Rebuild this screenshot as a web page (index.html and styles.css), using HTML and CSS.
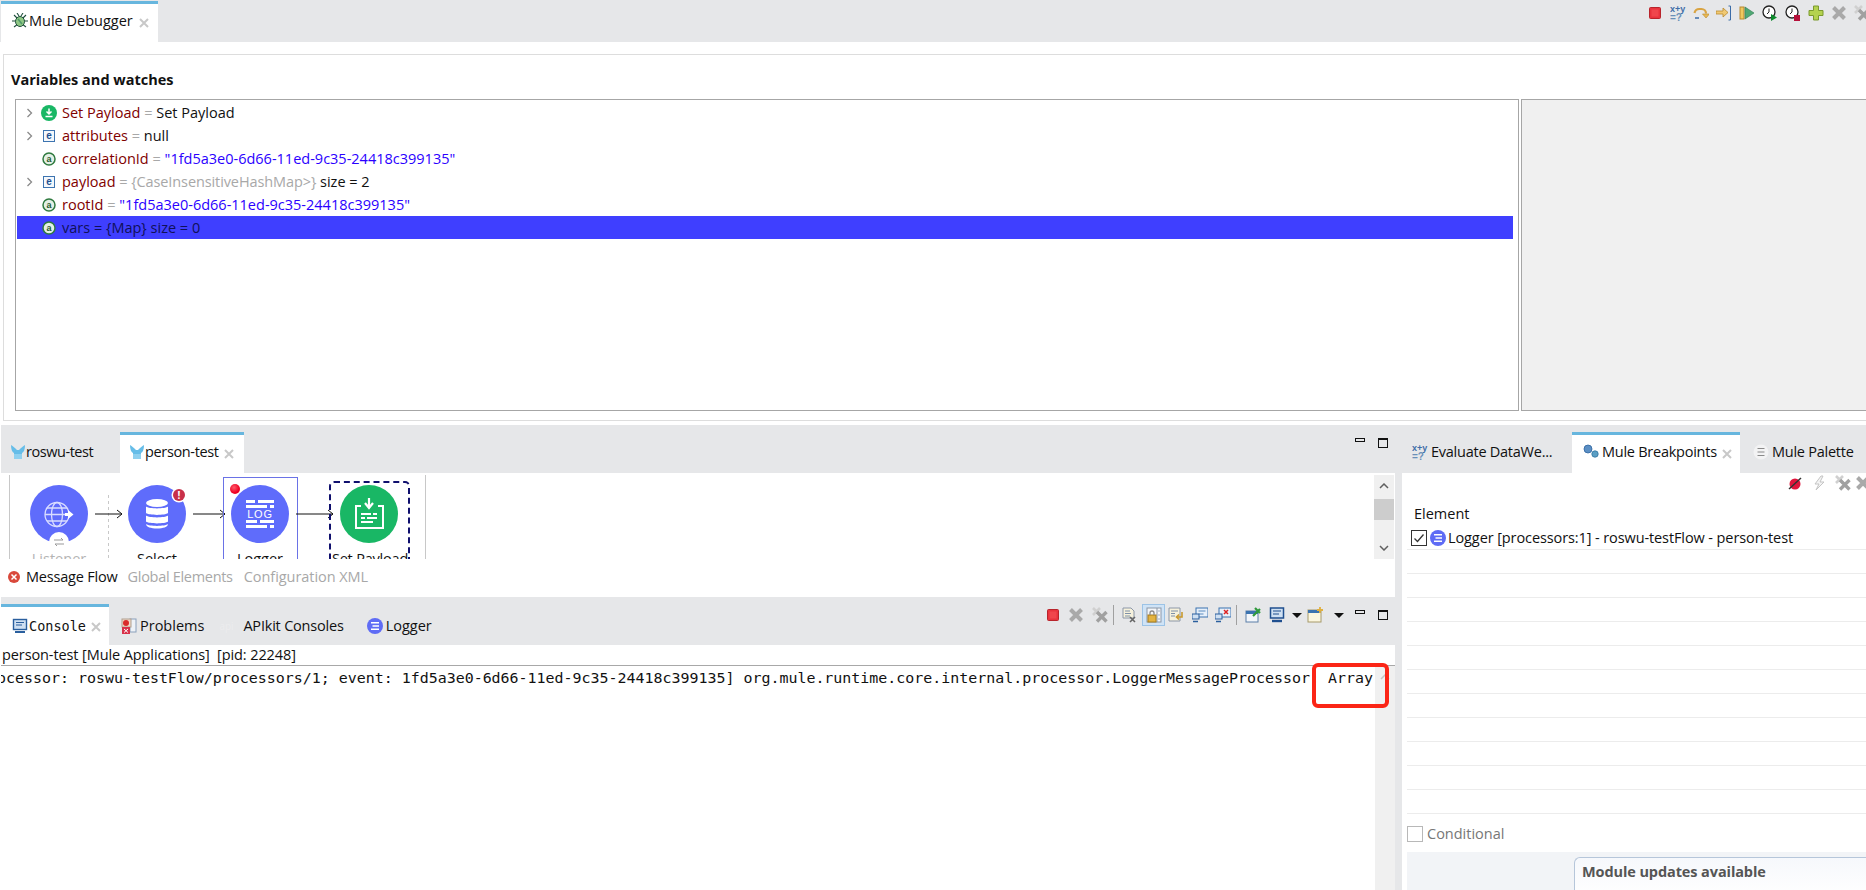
FILE: index.html
```html
<!DOCTYPE html>
<html lang="en">
<head>
<meta charset="utf-8">
<title>Mule Debugger</title>
<link rel="stylesheet" href="styles.css">
</head>
<body>
<svg class="defs" width="0" height="0" aria-hidden="true">
  <defs>
    <symbol id="i-stop" viewBox="0 0 16 16"><rect x="2.500" y="2.500" width="11" height="11" rx="1" fill="#e8333c" stroke="#b8242c"/><rect x="4.500" y="4.500" width="7" height="7" fill="#f0464c"/></symbol>
    <symbol id="i-x" viewBox="0 0 16 16"><path d="M2.500 2.500l11 11M13.500 2.500l-11 11" stroke="#a9a9a9" stroke-width="4"/></symbol>
    <symbol id="i-xx" viewBox="0 0 16 16"><path d="M1 1l7 7M8 1L1 8" stroke="#d0d0d0" stroke-width="2.600"/><path d="M5 5l9.500 9.500M14.500 5L5 14.500" stroke="#a0a0a0" stroke-width="3.400"/></symbol>
    <symbol id="i-close" viewBox="0 0 12 12"><path d="M2 2l8 8M10 2l-8 8" stroke="#c8c8c8" stroke-width="2"/></symbol>
    <symbol id="i-logger" viewBox="0 0 16 16"><circle cx="8" cy="8" r="8" fill="#5f6cf5"/><path d="M4 4.800h8M5.500 8h6.500M4 11.200h8" stroke="#fff" stroke-width="1.500"/></symbol>
    <symbol id="i-elem" viewBox="0 0 16 16"><rect x="2.500" y="2.500" width="11" height="11" fill="#f4f8fc" stroke="#3d74b0"/><text x="8" y="11" class="elem-text">e</text></symbol>
    <symbol id="i-at" viewBox="0 0 16 16"><circle cx="8" cy="8" r="6" fill="#e4f0e6" stroke="#2f7a3f" stroke-width="1.500"/><text x="8" y="11" class="at-text">a</text></symbol>
    <symbol id="i-chev" viewBox="0 0 10 12"><path d="M2.500 2l4 4-4 4" fill="none" stroke="#8a8a8a" stroke-width="1.300"/></symbol>
    <symbol id="i-mule" viewBox="0 0 16 16"><path d="M1 1c2 1 4 3 6 5h2c2-2 4-4 6-5 0 4-1 7-3 8v6H4V9C2 8 1 5 1 1z" fill="#66bde8"/><path d="M4 10h8v5H4z" fill="#8fd0ef"/></symbol>
    <symbol id="i-xy" viewBox="0 0 16 18"><text x="0" y="8" class="xy-a">x+y</text><text x="0" y="17" class="xy-b">=?</text></symbol>
  </defs>
</svg>

<section class="debug-view">
  <header class="tabbar top-tabbar">
    <div class="tab tab-active debugger-tab">
      <svg class="tab-icon" viewBox="0 0 16 16"><g stroke="#1f4f3c" stroke-width="1.100" fill="none"><path d="M2 2l4 4M14 2l-4 4M0 8h4M12 8h4M2 14l4-3M14 14l-4-3M5 0l2 3M11 0L9 3"/></g><ellipse cx="8" cy="8.500" rx="4.500" ry="5" fill="#8fc884" stroke="#1f4f3c"/><path d="M6 6l4 5" stroke="#4f9a6a" stroke-width="1.500"/></svg>
      <span class="tab-label">Mule Debugger</span>
      <svg class="tab-close"><use href="#i-close"/></svg>
    </div>
    <div class="toolbar top-toolbar">
      <svg class="tool"><use href="#i-stop"/></svg>
      <svg class="tool tool-tall"><use href="#i-xy"/></svg>
      <svg class="tool" viewBox="0 0 16 16"><path d="M1.500 8a5 5 0 0 1 5-4h2a4.500 4.500 0 0 1 4.500 4.500" fill="none" stroke="#d9a443" stroke-width="2.200"/><path d="M9.500 9h7l-3.500 4z" fill="#e9b955" stroke="#b98a2e" stroke-width=".6"/><path d="M2 13h4" stroke="#3b6ca8" stroke-width="1.500"/></svg>
      <svg class="tool" viewBox="0 0 16 16"><path d="M0 6h7V3l5 4.500L7 12V9H0z" fill="#f0c973" stroke="#b98a2e" stroke-width=".8"/><path d="M12.500 1h2v14h-2" fill="none" stroke="#3b6ca8"/></svg>
      <svg class="tool" viewBox="0 0 16 16"><rect x="1" y="2" width="4" height="12" fill="#efc85f" stroke="#b98a2e"/><path d="M6 2l9 6-9 6z" fill="#4fa874" stroke="#2f7a50" stroke-width=".6"/></svg>
      <svg class="tool" viewBox="0 0 16 16"><circle cx="7" cy="7" r="6" fill="#fff" stroke="#222" stroke-width="1.300"/><path d="M7 3.500V7L5 9" fill="none" stroke="#222"/><path d="M9 9l6 3.500L9 16z" fill="#0d8a2c"/></svg>
      <svg class="tool" viewBox="0 0 16 16"><circle cx="7" cy="7" r="6" fill="#fff" stroke="#222" stroke-width="1.300"/><path d="M7 3.500V7L5 9" fill="none" stroke="#222"/><rect x="9" y="10" width="6" height="6" fill="#b5103a"/></svg>
      <svg class="tool" viewBox="0 0 16 16"><path d="M5.500 1h5v4.500H15v5h-4.500V15h-5v-4.500H1v-5h4.500z" fill="#b4d24f" stroke="#7b9a2e"/></svg>
      <svg class="tool"><use href="#i-x"/></svg>
      <svg class="tool"><use href="#i-xx"/></svg>
    </div>
  </header>
  <div class="debug-panel">
    <h2 class="panel-title">Variables and watches</h2>
    <div class="panel-split">
      <div class="tree">
        <div class="tree-row">
          <svg class="chev"><use href="#i-chev"/></svg>
          <svg class="node-icon" viewBox="0 0 16 16"><circle cx="8" cy="8" r="8" fill="#19b765"/><path d="M8 3.500v5M5.500 6.500L8 9l2.500-2.500M4.500 11.500h7" fill="none" stroke="#fff" stroke-width="1.500"/></svg>
          <span><span class="var">Set Payload</span> <span class="eq">=</span> Set Payload</span>
        </div>
        <div class="tree-row">
          <svg class="chev"><use href="#i-chev"/></svg>
          <svg class="node-icon"><use href="#i-elem"/></svg>
          <span><span class="var">attributes</span> <span class="eq">=</span> null</span>
        </div>
        <div class="tree-row">
          <span class="chev"></span>
          <svg class="node-icon"><use href="#i-at"/></svg>
          <span><span class="var">correlationId</span> <span class="eq">=</span> <span class="str">"1fd5a3e0-6d66-11ed-9c35-24418c399135"</span></span>
        </div>
        <div class="tree-row">
          <svg class="chev"><use href="#i-chev"/></svg>
          <svg class="node-icon"><use href="#i-elem"/></svg>
          <span><span class="var">payload</span> <span class="eq eq-long">= {CaseInsensitiveHashMap&gt;}</span> size = 2</span>
        </div>
        <div class="tree-row">
          <span class="chev"></span>
          <svg class="node-icon"><use href="#i-at"/></svg>
          <span><span class="var">rootId</span> <span class="eq">=</span> <span class="str">"1fd5a3e0-6d66-11ed-9c35-24418c399135"</span></span>
        </div>
        <div class="tree-row tree-row-selected">
          <span class="chev"></span>
          <svg class="node-icon"><use href="#i-at"/></svg>
          <span>vars = {Map} size = 0</span>
        </div>
      </div>
      <div class="detail-box"></div>
    </div>
  </div>
</section>

<main class="workbench">
  <div class="left-column">
    <section class="editor">
      <header class="tabbar">
        <div class="tab roswu-tab">
          <svg class="tab-icon"><use href="#i-mule"/></svg>
          <span class="tab-label">roswu-test</span>
        </div>
        <div class="tab tab-active person-tab">
          <svg class="tab-icon"><use href="#i-mule"/></svg>
          <span class="tab-label">person-test</span>
          <svg class="tab-close"><use href="#i-close"/></svg>
        </div>
        <div class="toolbar window-tools">
          <span class="win-min"></span>
          <span class="win-max"></span>
        </div>
      </header>
      <div class="editor-body">
        <div class="flow-canvas">
          <span class="flow-line flow-line-start"></span>
          <span class="flow-line flow-line-dash"></span>
          <span class="flow-line flow-line-end"></span>

          <span class="flow-node node-listener">
            <svg viewBox="0 0 58 58"><circle cx="29" cy="29" r="29" fill="#5f6cfb"/><g fill="none" stroke="#d9ddff" stroke-width="1.300"><circle cx="27" cy="29.500" r="12"/><ellipse cx="27" cy="29.500" rx="5.500" ry="12"/><path d="M15 29.500h24M17 23h20M17 36h20"/></g><path d="M35 28h3v-3l5.500 4.500L38 34v-3h-3z" fill="#fff"/></svg>
          </span>
          <svg class="flow-badge-swap" viewBox="0 0 20 20"><circle cx="10" cy="10" r="10" fill="#fff"/><path d="M5 8h9l-2-2M15 12H6l2 2" fill="none" stroke="#999"/></svg>
          <span class="flow-label label-listener">Listener</span>

          <svg class="flow-arrow arrow-a" viewBox="0 0 28 10"><path d="M0 5h27M22 1l5 4-5 4" fill="none" stroke="#111"/></svg>

          <span class="flow-node node-select">
            <svg viewBox="0 0 58 58"><circle cx="29" cy="29" r="29" fill="#5f6cfb"/><ellipse cx="29" cy="18" rx="11" ry="4" fill="#fff"/><path d="M18 21.500c3 2.500 19 2.500 22 0V28c-3 2.500-19 2.500-22 0zM18 30.500c3 2.500 19 2.500 22 0v6c-3 2.500-19 2.500-22 0zM18 39c3 2.500 19 2.500 22 0 0 3-5 4.500-11 4.500S18 42 18 39z" fill="#fff"/></svg>
          </span>
          <span class="flow-badge-error">!</span>
          <span class="flow-label label-select">Select</span>

          <svg class="flow-arrow arrow-b" viewBox="0 0 33 10"><path d="M0 5h32M27 1l5 4-5 4" fill="none" stroke="#111"/></svg>

          <span class="flow-select-box"></span>
          <span class="flow-node node-logger">
            <svg viewBox="0 0 58 58"><circle cx="29" cy="29" r="29" fill="#5f6cfb"/><path d="M15 15h9v3h-9zM27 15h16v3H27zM15 20h21v3H15zM39 20h4v3h-4zM15 35h11v3H15zM29 35h14v3H29zM15 40h21v3H15zM39 40h4v3h-4z" fill="#fff"/><text x="29" y="33" class="log-text">LOG</text></svg>
          </span>
          <span class="flow-breakpoint"></span>
          <span class="flow-label label-logger">Logger</span>

          <svg class="flow-arrow arrow-c" viewBox="0 0 38 10"><path d="M0 5h37M32 1l5 4-5 4" fill="none" stroke="#111"/></svg>

          <span class="flow-current-box"></span>
          <span class="flow-node node-payload">
            <svg viewBox="0 0 58 58"><circle cx="29" cy="29" r="29" fill="#19b765"/><path d="M21 21h-5v22h27V21h-5" fill="none" stroke="#fff" stroke-width="2"/><path d="M29 13v9M25 18l4 5 4-5" fill="none" stroke="#fff" stroke-width="2.200"/><path d="M21 29h10M33 29h4M21 33h4M27 33h10M21 37h12" stroke="#fff" stroke-width="2"/></svg>
          </span>
          <span class="flow-label label-payload">Set Payload</span>
        </div>
        <div class="scrollbar editor-scroll">
          <svg class="scroll-arrow" viewBox="0 0 10 6"><path d="M1 5l4-4 4 4" fill="none" stroke="#606060" stroke-width="1.500"/></svg>
          <span class="scroll-thumb"></span>
          <svg class="scroll-arrow scroll-arrow-end" viewBox="0 0 10 6"><path d="M1 1l4 4 4-4" fill="none" stroke="#606060" stroke-width="1.500"/></svg>
        </div>
      </div>
      <nav class="editor-pages">
        <svg class="page-error" viewBox="0 0 12 12"><circle cx="6" cy="6" r="6" fill="#d9483b"/><path d="M3.500 3.500l5 5M8.500 3.500l-5 5" stroke="#fff" stroke-width="1.500"/></svg>
        <span class="page-current">Message Flow</span>
        <span class="page-link page-global">Global Elements</span>
        <span class="page-link">Configuration XML</span>
      </nav>
    </section>

    <section class="console">
      <header class="tabbar">
        <div class="tab tab-active console-tab">
          <svg class="tab-icon" viewBox="0 0 16 16"><rect x="1.500" y="1.500" width="13" height="10" fill="#cfe0f2" stroke="#2a5f9e" stroke-width="1.400"/><path d="M4 4.500h8M4 7h6" stroke="#2a5f9e"/><path d="M3 14h10" stroke="#2a5f9e" stroke-width="2"/></svg>
          <span class="tab-label mono">Console</span>
          <svg class="tab-close"><use href="#i-close"/></svg>
        </div>
        <div class="tab problems-tab">
          <svg class="tab-icon" viewBox="0 0 16 16"><rect x="9" y="1" width="6" height="13" fill="#eef2f7" stroke="#8aa0bb"/><rect x="1" y="1" width="9" height="8" fill="#f2d9c8" stroke="#b0a090"/><circle cx="5" cy="5" r="3" fill="#d92b2b"/><rect x="1" y="9" width="8" height="7" fill="#d8324a"/><path d="M3 11l4 3.500M7 11l-4 3.500" stroke="#fff"/></svg>
          <span class="tab-label">Problems</span>
        </div>
        <div class="tab apikit-tab">
          <span class="api-mark">api</span>
          <span class="tab-label">APIkit Consoles</span>
        </div>
        <div class="tab logger-tab">
          <svg class="tab-icon"><use href="#i-logger"/></svg>
          <span class="tab-label">Logger</span>
        </div>
        <div class="toolbar console-tools">
          <svg class="tool gap-7"><use href="#i-stop"/></svg>
          <svg class="tool gap-8"><use href="#i-x"/></svg>
          <svg class="tool gap-5"><use href="#i-xx"/></svg>
          <span class="tool-sep gap-7"></span>
          <svg class="tool gap-5" viewBox="0 0 16 16"><path d="M2 1h8l3 3v7H2z" fill="#f6f1dc" stroke="#8c97a8"/><path d="M4 4h5M4 6.500h6M4 9h5" stroke="#7d90a8"/><path d="M9 10l5 5M14 10l-5 5" stroke="#666" stroke-width="1.600"/></svg>
          <span class="tool-on gap-3"><svg class="tool" viewBox="0 0 16 16"><rect x="1" y="1" width="14" height="14" fill="#f4f6f9" stroke="#8c97a8"/><path d="M11 1v14" stroke="#8c97a8"/><path d="M12.500 4h1M12.500 8h1M12.500 12h1" stroke="#4a6a90"/><rect x="2" y="8" width="8" height="7" fill="#e3b341" stroke="#a67c1c"/><path d="M4 8V6a2 2 0 0 1 4 0v2" fill="none" stroke="#8a8a8a" stroke-width="1.300"/></svg></span>
          <svg class="tool gap-8" viewBox="0 0 16 16"><path d="M1 1h11v13H1z" fill="#f6f1dc" stroke="#8c97a8"/><path d="M3 4h7M3 6.500h4M3 9h4" stroke="#7d90a8"/><path d="M14 5v5H9M11 7.500L8.500 10l2.500 2.500" fill="none" stroke="#c99a2e" stroke-width="1.600"/></svg>
          <svg class="tool gap-7" viewBox="0 0 16 16"><rect x="4" y="1" width="12" height="9" fill="#e7f0fa" stroke="#3b73b0"/><path d="M6.500 4h7M6.500 7h5" stroke="#5b8cc0"/><rect x="0" y="7" width="7" height="5" fill="#cfe0f2" stroke="#2a5f9e"/><path d="M1 14.500h5" stroke="#2a5f9e" stroke-width="1.500"/></svg>
          <svg class="tool gap-5" viewBox="0 0 16 16"><rect x="4" y="1" width="12" height="9" fill="#e7f0fa" stroke="#3b73b0"/><path d="M9 3l4 4M13 3L9 7" stroke="#d22" stroke-width="1.500"/><rect x="0" y="7" width="7" height="5" fill="#cfe0f2" stroke="#2a5f9e"/><path d="M1 14.500h5" stroke="#2a5f9e" stroke-width="1.500"/></svg>
          <span class="tool-sep gap-8"></span>
          <svg class="tool gap-8" viewBox="0 0 16 16"><rect x="1" y="4" width="12" height="11" fill="#f3f6fa" stroke="#5a7fa8"/><path d="M1 4h12v3H1z" fill="#3b73b0"/><path d="M8 9l7-7M10 1l5 5" stroke="#2f9a3c" stroke-width="2.200"/></svg>
          <svg class="tool gap-7" viewBox="0 0 16 16"><rect x="1.500" y="1" width="13" height="10" fill="#cfe0f2" stroke="#1f4f8f" stroke-width="1.500"/><path d="M4 4h8M4 7h6" stroke="#1f4f8f"/><path d="M3 14h10" stroke="#1f4f8f" stroke-width="2.400"/></svg>
          <span class="tool-caret gap-5"></span>
          <svg class="tool gap-11" viewBox="0 0 16 16"><rect x="1" y="3" width="13" height="12" fill="#fbf6df" stroke="#a69a6a"/><path d="M1 3h13v3H1z" fill="#3b73b0"/><path d="M13 0v6M10 3h6" stroke="#e0b040" stroke-width="1.800"/></svg>
          <span class="tool-caret gap-11"></span>
          <span class="win-min gap-13"></span>
          <span class="win-max"></span>
        </div>
      </header>
      <div class="console-status">person-test [Mule Applications]&nbsp; [pid: 22248]</div>
      <div class="console-body">
        <div class="console-output mono">
          <span class="console-line">ocessor: roswu-testFlow/processors/1; event: 1fd5a3e0-6d66-11ed-9c35-24418c399135] org.mule.runtime.core.internal.processor.LoggerMessageProcessor:&nbsp;Array</span>
        </div>
        <div class="scrollbar console-scroll">
          <svg class="scroll-arrow scroll-arrow-faint" viewBox="0 0 10 6"><path d="M1 5l4-4 4 4" fill="none" stroke="#c4c4c4" stroke-width="1.500"/></svg>
        </div>
        <span class="highlight-box"></span>
      </div>
    </section>
  </div>

  <div class="sash"></div>

  <aside class="right-column">
    <header class="tabbar">
      <div class="tab evaluate-tab">
        <svg class="tab-icon tool-tall"><use href="#i-xy"/></svg>
        <span class="tab-label">Evaluate DataWe...</span>
      </div>
      <div class="tab tab-active breakpoints-tab">
        <svg class="tab-icon" viewBox="0 0 16 16"><circle cx="5" cy="5" r="4" fill="#5b8fc4" stroke="#2f64a0" stroke-width=".8"/><circle cx="12" cy="10" r="3.200" fill="#5b9fc4" stroke="#2f74a0" stroke-width=".8"/></svg>
        <span class="tab-label">Mule Breakpoints</span>
        <svg class="tab-close"><use href="#i-close"/></svg>
      </div>
      <div class="tab palette-tab">
        <svg class="tab-icon" viewBox="0 0 16 16"><circle cx="8" cy="8" r="7.500" fill="#f3f3f4"/><path d="M4.500 4.500h7M4.500 8h7M4.500 11.500h7" stroke="#8a8a8a"/></svg>
        <span class="tab-label">Mule Palette</span>
      </div>
    </header>
    <div class="bp-toolbar">
      <svg class="tool" viewBox="0 0 16 16"><circle cx="8" cy="9" r="5.500" fill="#e0143c"/><path d="M2 14L14 3" stroke="#333" stroke-width="1.500"/></svg>
      <svg class="tool" viewBox="0 0 16 16"><path d="M10 1L4 9h4l-3 6 8-8H9l3-6z" fill="#f4f4f4" stroke="#c4c4c4"/></svg>
      <svg class="tool"><use href="#i-xx"/></svg>
      <svg class="tool tool-clipped"><use href="#i-x"/></svg>
    </div>
    <div class="bp-heading">Element</div>
    <div class="bp-table">
      <div class="bp-row bp-row-first">
        <span class="check check-on"><svg viewBox="0 0 14 14"><path d="M2.500 7.500l3 3 6-7" fill="none" stroke="#333" stroke-width="1.300"/></svg></span>
        <svg class="bp-icon"><use href="#i-logger"/></svg>
        <span>Logger [processors:1] - roswu-testFlow - person-test</span>
      </div>
      <div class="bp-row"></div><div class="bp-row"></div><div class="bp-row"></div>
      <div class="bp-row"></div><div class="bp-row"></div><div class="bp-row"></div>
      <div class="bp-row"></div><div class="bp-row"></div><div class="bp-row"></div>
      <div class="bp-row"></div><div class="bp-row"></div>
    </div>
    <label class="conditional"><span class="check"></span><span>Conditional</span></label>
    <div class="update-area">
      <div class="update-card">
        <div class="update-title">Module updates available</div>
      </div>
    </div>
  </aside>
</main>
</body>
</html>
```

FILE: styles.css
```css
* { box-sizing: border-box; }
html, body { margin: 0; padding: 0; }
body {
  width: 1866px;
  height: 890px;
  overflow: hidden;
  background: #fff;
  color: #111;
  font-family: "Open Sans", "Noto Sans", sans-serif;
  font-size: 14.5px;
  line-height: 20px;
}
.defs { position: absolute; }
.mono { font-family: "DejaVu Sans Mono", "Liberation Mono", monospace; font-size: 14.950px; }

.debug-view { height: 425px; display: flex; flex-direction: column; padding-left: 1px; }
.tabbar {
  height: 48px;
  flex: none;
  display: flex;
  align-items: flex-end;
  background: #e6e7e9;
  overflow: hidden;
}
.top-tabbar { height: 42px; margin-left: -1px; padding-left: 1px; }
.tab {
  height: 41px;
  display: flex;
  align-items: center;
  border-top: 3px solid transparent;
  padding-bottom: 4px;
  white-space: nowrap;
  flex: none;
}
.tab-active { background: #fff; border-top-color: #67b6de; }
.tab-icon { width: 16px; height: 16px; flex: none; margin-right: 3px; }
.tab-close { width: 12px; height: 12px; flex: none; margin-left: 4px; margin-top: 3px; }
.tab-label { letter-spacing: -.25px; }

.debugger-tab { width: 157px; padding-left: 11px; }
.debugger-tab .tab-icon { margin-right: 1px; }
.debugger-tab .tab-label { letter-spacing: 0; margin-right: 1px; }
.roswu-tab { width: 119px; padding-left: 9px; }
.person-tab { width: 124px; padding-left: 9px; }
.roswu-tab .tab-icon, .person-tab .tab-icon { margin-right: 0; }
.roswu-tab .tab-label { letter-spacing: -.45px; }
.person-tab .tab-label { letter-spacing: -.35px; }
.console .tab { padding-bottom: 1px; }
.console-tab { width: 108px; padding-left: 11px; }
.console-tab .tab-label { font-size: 13.500px; margin-left: -2px; letter-spacing: 0; }
.problems-tab { padding-left: 12px; }
.problems-tab .tab-label { letter-spacing: 0; }
.apikit-tab { padding-left: 15px; }
.api-mark { color: #ececee; font-size: 10px; width: 24px; flex: none; }
.apikit-tab .tab-label { letter-spacing: -.2px; }
.logger-tab { padding-left: 23px; }
.logger-tab .tab-label { letter-spacing: 0; }
.evaluate-tab { width: 170px; padding-left: 10px; }
.breakpoints-tab { width: 168px; padding-left: 11px; }
.palette-tab { padding-left: 13px; }

.toolbar { display: flex; align-items: center; margin-left: auto; flex: none; align-self: stretch; }
.tool { width: 16px; height: 16px; flex: none; display: block; }
.tool-tall { height: 18px; }
.top-toolbar { gap: 7px; margin-right: -4px; padding-bottom: 17px; }
.xy-a { font: 700 9px "Liberation Sans", sans-serif; fill: #3f6ea8; }
.xy-b { font: 700 10px "Liberation Sans", sans-serif; fill: #6a8fb8; }
.elem-text { font: 700 10px "Liberation Sans", sans-serif; fill: #1f4f8f; text-anchor: middle; }
.at-text { font: 700 9px "Liberation Sans", sans-serif; fill: #1f5a2c; text-anchor: middle; }

.debug-panel {
  flex: 1;
  margin: 12px 0 4px 2px;
  border: 1px solid #ddd;
  border-right: 0;
  padding: 15px 0 0 7px;
  display: flex;
  flex-direction: column;
  min-height: 0;
}
.panel-title { margin: 0 0 9px 0; font-size: 14.5px; font-weight: 700; line-height: 20px; color: #111; padding-left: 0; }
.panel-split { display: flex; gap: 2px; height: 312px; padding-left: 4px; }
.tree { width: 1504px; border: 1px solid #a6a6a6; padding: 1px 0 0 1px; flex: none; }
.tree-row { height: 23px; display: flex; align-items: center; width: 1496px; padding-left: 8px; }
.tree-row-selected { background: #3f3fff; color: #10105a; }
.chev { width: 10px; height: 12px; flex: none; margin-right: 6px; }
.node-icon { width: 16px; height: 16px; flex: none; margin-right: 5px; }
.var { color: #7f0000; }
.eq { color: #a8a8a8; }
.eq-long { letter-spacing: -.1px; }
.str { color: #2a00ff; }
.detail-box { flex: 1; background: #f0f0f0; border: 1px solid #a6a6a6; border-right: 0; }

.workbench { height: 465px; display: flex; }
.left-column { width: 1395px; flex: none; padding-left: 1px; display: flex; flex-direction: column; }
.sash { width: 7px; flex: none; background: #e6e7e9; }
.right-column { flex: 1; min-width: 0; display: flex; flex-direction: column; overflow: hidden; }

.editor { height: 172px; flex: none; display: flex; flex-direction: column; }
.window-tools { gap: 13px; padding: 0 7px 0 0; }
.win-min { width: 10px; height: 4px; border: 1px solid #111; flex: none; align-self: flex-start; margin-top: 13px; }
.win-max { width: 10px; height: 10px; border: 1px solid #111; border-top-width: 2px; flex: none; align-self: flex-start; margin-top: 13px; }

.editor-body { height: 86px; display: flex; padding-top: 0; }
.flow-canvas { position: relative; flex: 1; min-width: 0; height: 86px; overflow: hidden; }
.flow-line { position: absolute; top: 2px; bottom: 0; width: 1px; background: #c8c8c8; }
.flow-line-start { left: 8px; }
.flow-line-end { left: 424px; }
.flow-line-dash { left: 107px; top: 22px; background: repeating-linear-gradient(#c8c8c8 0 3px, transparent 3px 6px); }
.flow-node { position: absolute; top: 12px; width: 58px; height: 58px; }
.flow-node svg { display: block; width: 58px; height: 58px; }
.node-listener { left: 29px; }
.node-select { left: 127px; }
.node-logger { left: 230px; }
.node-payload { left: 339px; }
.flow-label { position: absolute; top: 76px; transform: translateX(-50%); white-space: nowrap; line-height: 20px; }
.label-listener { left: 58px; color: #b4b4b4; }
.label-select { left: 156px; }
.label-logger { left: 259px; }
.label-payload { left: 369px; letter-spacing: -.2px; }
.flow-arrow { position: absolute; top: 36px; height: 10px; }
.arrow-a { left: 94px; width: 28px; }
.arrow-b { left: 192px; width: 33px; }
.arrow-c { left: 295px; width: 38px; }
.flow-badge-swap { position: absolute; left: 48px; top: 59px; width: 20px; height: 20px; }
.flow-badge-error {
  position: absolute; left: 172px; top: 16px; width: 12px; height: 12px; border-radius: 50%;
  background: #c8304a; color: #fff; font-size: 10px; font-weight: 700; line-height: 12px; text-align: center;
  box-shadow: 0 0 0 1.500px #fff;
}
.flow-select-box { position: absolute; left: 222px; top: 4px; width: 75px; height: 90px; border: 1px solid #6a72e6; }
.flow-breakpoint { position: absolute; left: 229px; top: 11px; width: 10px; height: 10px; border-radius: 50%; background: radial-gradient(circle at 40% 35%, #ff5a6a, #ee0022 60%); }
.flow-current-box { position: absolute; left: 328px; top: 8px; width: 81px; height: 90px; border: 2px dashed #10106e; border-radius: 5px; }
.log-text { font: 11px "Liberation Sans", sans-serif; fill: #fff; text-anchor: middle; letter-spacing: .8px; }

.scrollbar { background: #f0f0f0; flex: none; position: relative; }
.editor-scroll { width: 20px; height: 84px; margin: 2px 1px 0 0; display: flex; flex-direction: column; align-items: center; }
.scroll-arrow { width: 10px; height: 6px; margin-top: 8px; flex: none; display: block; }
.scroll-thumb { align-self: stretch; height: 21px; margin-top: 10px; background: #cdcdcd; flex: none; }
.scroll-arrow-end { margin-top: auto; margin-bottom: 8px; }
.scroll-arrow-faint { margin: 8px auto 0; }

.editor-pages { height: 38px; display: flex; align-items: center; padding: 0 0 2px 7px; }
.page-error { width: 12px; height: 12px; margin-right: 6px; flex: none; }
.page-current { margin-right: 10px; letter-spacing: -.2px; }
.page-link { color: #a8a8a8; margin-right: 11px; letter-spacing: -.05px; }
.page-global { letter-spacing: -.3px; }

.console { flex: 1; min-height: 0; display: flex; flex-direction: column; position: relative; }
.console-tools { padding: 0 7px 12px 0; }
.gap-3 { margin-right: 3px; }
.gap-5 { margin-right: 5px; }
.gap-7 { margin-right: 7px; }
.gap-8 { margin-right: 8px; }
.gap-11 { margin-right: 11px; }
.gap-13 { margin-right: 13px; }
.tool-sep { width: 1px; height: 20px; background: #a0a0a0; flex: none; }
.tool-on { width: 23px; height: 22px; background: #cfe3f6; border: 1px solid #9cc3e6; display: flex; align-items: center; justify-content: center; flex: none; }
.tool-caret { width: 10px; height: 0; border: 5px solid transparent; border-top: 5px solid #111; border-bottom: 0; flex: none; }
.console-status { height: 20px; flex: none; padding-left: 1px; white-space: nowrap; line-height: 20px; letter-spacing: -.1px; }
.console-body { flex: 1; min-height: 0; display: flex; border-top: 1px solid #a8a8a8; position: relative; }
.console-output { flex: 1; min-width: 0; overflow: hidden; padding-top: 3px; line-height: 18px; white-space: nowrap; }
.console-line { display: block; margin-left: -4px; }
.console-scroll { width: 20px; display: flex; flex-direction: column; }
.highlight-box { position: absolute; left: 1311px; top: -3px; width: 77px; height: 45px; border: 4px solid #fb2516; border-radius: 6px; }

.bp-toolbar { height: 20px; flex: none; display: flex; gap: 8px; padding: 2px 0 0 385px; }
.tool-clipped { margin-left: -4px; }
.bp-heading { flex: none; padding: 11px 0 0 12px; line-height: 20px; height: 26px; margin-bottom: 7px; }
.bp-table { margin-left: 5px; flex: none; }
.bp-row { height: 24px; border-bottom: 1px solid #ececec; display: flex; align-items: center; white-space: nowrap; letter-spacing: -.1px; }
.bp-row-first { padding-left: 4px; }
.check { width: 16px; height: 16px; flex: none; border: 1px solid #b8b8b8; display: block; background: #fff; }
.check svg { display: block; width: 14px; height: 14px; }
.check-on { border-color: #333; margin-right: 3px; }
.bp-icon { width: 16px; height: 16px; flex: none; margin-right: 2px; }
.conditional { display: flex; align-items: center; gap: 4px; color: #777; height: 38px; flex: none; margin-left: 5px; padding-top: 1px; }
.update-area { flex: 1; min-height: 0; margin-left: 5px; background: #f2f4f7; padding: 5px 0 0 167px; }
.update-card { height: 40px; border: 1px solid #b6c6da; border-right: 0; border-bottom: 0; border-top-left-radius: 6px; background: linear-gradient(#f6f8fc, #fff); padding: 4px 0 0 7px; }
.update-title { height: 19px; overflow: hidden; font-weight: 700; color: #555; line-height: 20px; white-space: nowrap; letter-spacing: -.1px; }
```
